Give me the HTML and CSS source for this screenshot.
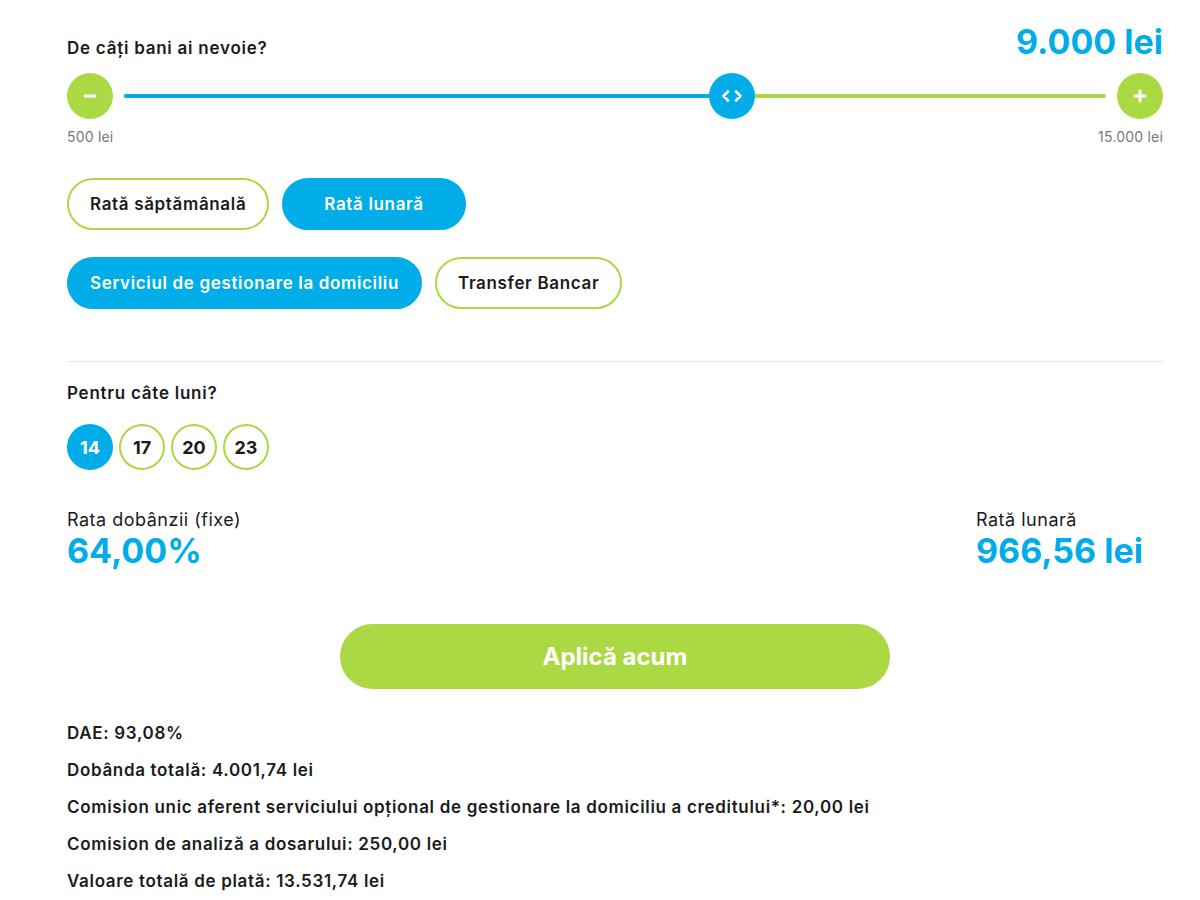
FILE: index.html
```html
<!DOCTYPE html>
<html lang="ro">
<head>
<meta charset="utf-8">
<title>Calculator credit</title>
<link rel="stylesheet" href="styles.css">
</head>
<body>
<div class="calc">
  <div class="amount-head">
    <div class="q">De câți bani ai nevoie?</div>
    <div class="big">9.000 lei</div>
  </div>
  <div class="slider">
    <div class="round-btn">
      <svg width="14" height="14" viewBox="0 0 14 14"><path d="M2 7h10" stroke="#fff" stroke-width="3" stroke-linecap="round"/></svg>
    </div>
    <div class="track">
      <div class="fill" style="width:61.9%"></div>
      <div class="thumb" style="left:61.9%">
        <svg width="22" height="14" viewBox="0 0 22 14"><path d="M7 2.5 2.5 7 7 11.5M15 2.5 19.5 7 15 11.5" fill="none" stroke="#fff" stroke-width="2.6" stroke-linecap="round" stroke-linejoin="round"/></svg>
      </div>
    </div>
    <div class="round-btn">
      <svg width="14" height="14" viewBox="0 0 14 14"><path d="M2 7h10M7 2v10" stroke="#fff" stroke-width="3" stroke-linecap="round"/></svg>
    </div>
  </div>
  <div class="limits"><span>500 lei</span><span>15.000 lei</span></div>

  <div class="pills row1">
    <div class="pill">Rată săptămânală</div>
    <div class="pill active wide">Rată lunară</div>
  </div>
  <div class="pills row2">
    <div class="pill active">Serviciul de gestionare la domiciliu</div>
    <div class="pill">Transfer Bancar</div>
  </div>

  <div class="divider"></div>

  <div class="q months-q">Pentru câte luni?</div>
  <div class="months">
    <div class="m active">14</div>
    <div class="m">17</div>
    <div class="m">20</div>
    <div class="m">23</div>
  </div>

  <div class="results">
    <div class="res">
      <div class="res-label">Rata dobânzii (fixe)</div>
      <div class="res-val">64,00%</div>
    </div>
    <div class="res res-right">
      <div class="res-label">Rată lunară</div>
      <div class="res-val">966,56 lei</div>
    </div>
  </div>

  <div class="cta-wrap"><div class="cta">Aplică acum</div></div>

  <div class="details">
    <div>DAE: 93,08%</div>
    <div>Dobânda totală: 4.001,74 lei</div>
    <div>Comision unic aferent serviciului opțional de gestionare la domiciliu a creditului*: 20,00 lei</div>
    <div>Comision de analiză a dosarului: 250,00 lei</div>
    <div>Valoare totală de plată: 13.531,74 lei</div>
  </div>
</div>
</body>
</html>
```

FILE: styles.css
```css
* { box-sizing: border-box; }
html, body { margin: 0; padding: 0; background: #fff; }
body {
  font-family: Inter, "Noto Sans", "Liberation Sans", sans-serif;
  color: #1b1b1b;
}
.calc {
  width: 1096px;
  margin-left: 67px;
  padding-top: 21px;
}
.amount-head {
  display: flex;
  justify-content: space-between;
  align-items: baseline;
}
.q {
  font-size: 17px;
  font-weight: 600;
  line-height: 22px;
  letter-spacing: 0.75px;
}
.big {
  font-size: 34px;
  font-weight: 700;
  line-height: 42px;
  color: #00ade8;
}
.slider {
  margin-top: 10px;
  display: flex;
  align-items: center;
  height: 46px;
}
.round-btn {
  width: 46px;
  height: 46px;
  border-radius: 50%;
  background: #abd943;
  display: flex;
  align-items: center;
  justify-content: center;
  flex: none;
}
.track {
  position: relative;
  flex: 1;
  height: 4px;
  margin: 0 11px;
  border-radius: 2px;
  background: #abd943;
}
.fill {
  height: 4px;
  border-radius: 2px;
  background: #00ade8;
}
.thumb {
  position: absolute;
  top: 50%;
  width: 46px;
  height: 46px;
  margin-top: -23px;
  margin-left: -23px;
  border-radius: 50%;
  background: #00ade8;
  display: flex;
  align-items: center;
  justify-content: center;
}
.limits {
  margin-top: 9px;
  display: flex;
  justify-content: space-between;
  font-size: 14px;
  line-height: 17px;
  color: #777;
  letter-spacing: 0.2px;
}
.pills {
  display: flex;
  gap: 13px;
}
.row1 { margin-top: 33px; }
.row2 { margin-top: 27px; }
.pill {
  height: 52px;
  padding: 0 21px;
  border-radius: 26px;
  border: 2px solid #abd943;
  background: #fff;
  display: flex;
  align-items: center;
  font-size: 17px;
  font-weight: 600;
  letter-spacing: 0.65px;
  color: #1b1b1b;
}
.pill.active {
  background: #00ade8;
  border-color: #00ade8;
  color: #fff;
}
.pill.wide { padding: 0 40px; }
.divider {
  margin-top: 52px;
  height: 1px;
  background: #e4e4e4;
}
.months-q { margin-top: 20px; }
.months {
  margin-top: 20px;
  display: flex;
  gap: 6px;
}
.m {
  width: 46px;
  height: 46px;
  border-radius: 50%;
  border: 2px solid #abd943;
  display: flex;
  align-items: center;
  justify-content: center;
  font-size: 18px;
  font-weight: 700;
}
.m.active {
  background: #00ade8;
  border-color: #00ade8;
  color: #fff;
}
.results {
  margin-top: 40px;
  display: flex;
  justify-content: space-between;
}
.res-right { width: 187px; }
.res-label {
  font-size: 18px;
  line-height: 20px;
  font-weight: 400;
  letter-spacing: 0.5px;
}
.res-val {
  font-size: 34px;
  font-weight: 700;
  line-height: 42px;
  color: #00ade8;
}
.cta-wrap {
  margin-top: 52px;
  display: flex;
  justify-content: center;
}
.cta {
  width: 550px;
  height: 65px;
  border-radius: 33px;
  background: #abd943;
  color: #fff;
  font-size: 24px;
  font-weight: 700;
  display: flex;
  align-items: center;
  justify-content: center;
}
.details {
  margin-top: 26px;
  font-size: 17px;
  font-weight: 600;
  line-height: 37px;
  letter-spacing: 0.67px;
}
```
